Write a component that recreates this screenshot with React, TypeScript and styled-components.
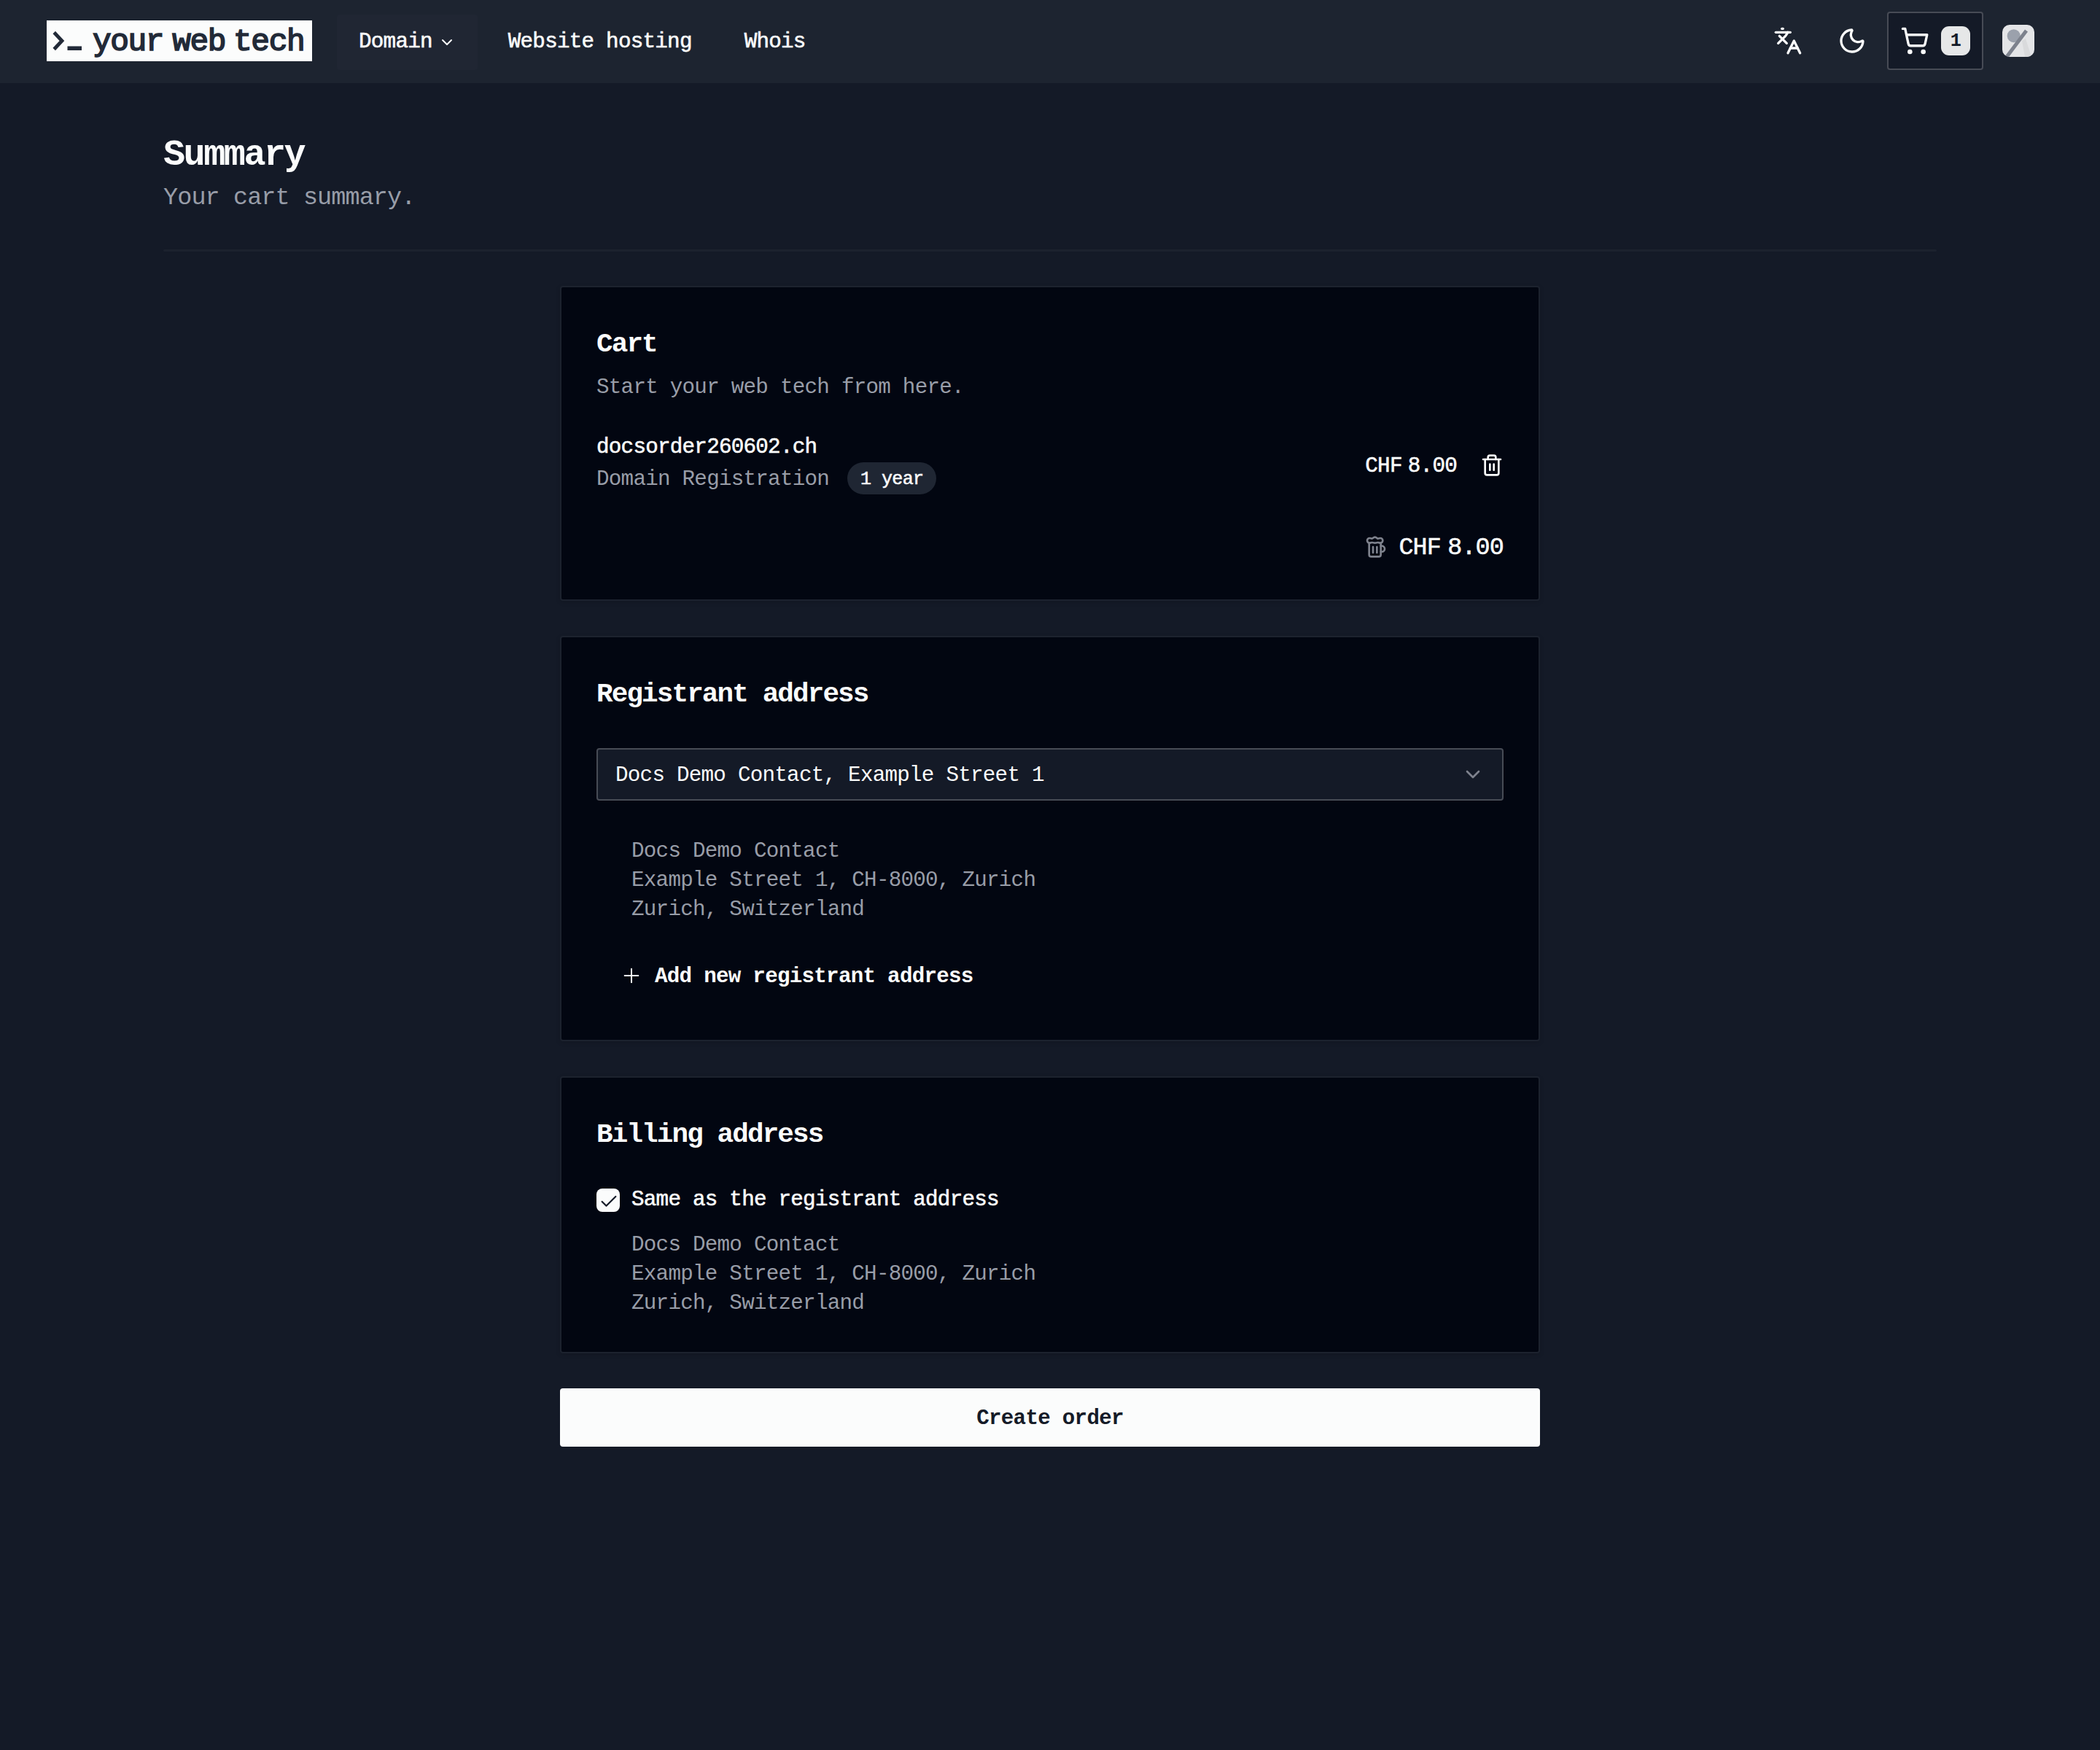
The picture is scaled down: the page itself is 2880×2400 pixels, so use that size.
import React from 'react';
import styled, { createGlobalStyle, css } from 'styled-components';
import { Beer, Check, ChevronDown, Languages, Moon, Plus, ShoppingCart, Trash2 } from 'lucide-react';

const color = {
  page: '#141a27',
  header: '#1d2430',
  card: '#020611',
  line: '#1c222e',
  outline: '#474b55',
  text: '#fbfcfc',
  muted: '#989da8',
  dim: '#7e828d',
  ink: '#151b28',
};

// Monospaced text on a 0.6em grid; glyphs are slightly enlarged while the advance stays on the grid.
const mono = (size: number, tracking = 0) => css`
  font-size: ${size * 1.045}px;
  letter-spacing: ${(size * 0.6 - size * 1.045 * 0.6001 + tracking).toFixed(3)}px;
`;

const medium = css`
  -webkit-text-stroke: 0.55px currentColor;
`;

const GlobalStyle = createGlobalStyle`
  *, *::before, *::after { box-sizing: border-box; }
  body {
    margin: 0;
    background: ${color.page};
    color: ${color.text};
    font-family: "Liberation Mono", "DejaVu Sans Mono", monospace;
    -webkit-font-smoothing: antialiased;
  }
  h1, h2, p { margin: 0; }
  button { font: inherit; color: inherit; border: 0; background: none; padding: 0; }
  svg { display: block; flex: none; }
`;

const Page = styled.div`
  min-height: 2400px;
  background: ${color.page};
`;

const Header = styled.header`
  display: flex;
  align-items: center;
  height: 114px;
  padding: 0 90px 2px 64px;
  background: ${color.header};
`;

const Logo = styled.a`
  display: flex;
  align-items: center;
  width: 364px;
  height: 56px;
  padding-left: 8px;
  background: ${color.text};
  color: #222a38;
`;

const LogoWord = styled.span<{ $gap: number }>`
  margin-left: ${(p) => p.$gap}px;
  ${mono(41, -0.3)}
  line-height: 59px;
  height: 56px;
  -webkit-text-stroke: 1.7px currentColor;
`;

const Nav = styled.nav`
  display: flex;
  align-items: center;
  gap: 12px;
  margin: 4px 0 0 34px;
`;

const NavItem = styled.a<{ $active?: boolean }>`
  display: flex;
  align-items: center;
  gap: 8px;
  height: 76px;
  padding: 0 30px;
  border-radius: 4px;
  background: ${(p) => (p.$active ? '#202633' : 'transparent')};
  ${mono(28)}
  ${medium}
  line-height: 40px;
  white-space: nowrap;
`;

const Actions = styled.div`
  display: flex;
  align-items: center;
  margin-left: auto;
`;

const IconButton = styled.button`
  display: grid;
  place-items: center;
  width: 88px;
  height: 80px;
`;

const CartButton = styled.button`
  display: flex;
  align-items: center;
  gap: 16px;
  width: 132px;
  height: 80px;
  margin-left: 4px;
  padding-left: 16px;
  border: 2px solid ${color.outline};
  border-radius: 4px;
  background: ${color.page};
`;

const CartCount = styled.span`
  width: 40px;
  height: 40px;
  border-radius: 11px;
  background: #e6e7e8;
  color: ${color.ink};
  ${mono(24)}
  font-weight: 700;
  line-height: 42px;
  text-align: center;
`;

const Avatar = styled.div`
  width: 44px;
  height: 44px;
  margin-left: 26px;
  border-radius: 10px;
  overflow: hidden;
  background: #e4e5e7;
`;

const Main = styled.main`
  width: 2432px;
  margin: 0 auto;
  padding-top: 67px;
`;

const PageTitle = styled.h1`
  ${mono(48, -1.2)}
  font-weight: 700;
  line-height: 64px;
`;

const PageLead = styled.p`
  margin-top: 4px;
  ${mono(32)}
  line-height: 44px;
  color: ${color.muted};
`;

const Separator = styled.hr`
  height: 3px;
  margin: 49px 0 47px;
  border: 0;
  border-radius: 2px;
  background: ${color.line};
`;

const Column = styled.div`
  display: flex;
  flex-direction: column;
  gap: 48px;
  width: 1344px;
  margin: 0 auto;
`;

const Card = styled.section<{ $height: number }>`
  display: flex;
  flex-direction: column;
  height: ${(p) => p.$height}px;
  padding: 48px 48px 0;
  border: 2px solid ${color.line};
  border-radius: 4px;
  background: ${color.card};
  box-shadow: 0 2px 6px rgba(0, 0, 0, 0.14);
`;

const CardTitle = styled.h2`
  ${mono(36, -0.9)}
  font-weight: 700;
  line-height: 60px;
`;

const CardDescription = styled.p`
  margin-top: 10px;
  ${mono(28)}
  line-height: 40px;
  color: ${color.muted};
`;

const CartItem = styled.div`
  display: flex;
  justify-content: space-between;
  height: 88px;
  margin-top: 42px;
`;

const ItemName = styled.div`
  ${mono(28)}
  ${medium}
  line-height: 40px;
`;

const ItemMeta = styled.div`
  display: flex;
  align-items: center;
  gap: 25px;
  height: 44px;
  ${mono(28)}
  line-height: 40px;
  color: ${color.muted};
`;

const ItemType = styled.span`
  padding-top: 4px;
`;

const Badge = styled.span`
  height: 44px;
  padding: 0 18px;
  border-radius: 22px;
  background: #1f2633;
  color: ${color.text};
  ${mono(24)}
  ${medium}
  line-height: 47px;
`;

const PriceGroup = styled.div`
  display: flex;
  align-items: center;
  gap: 32px;
`;

const Price = styled.span<{ $size: number }>`
  display: flex;
  gap: ${(p) => p.$size * 0.29}px;
  padding-top: ${(p) => (p.$size > 30 ? 2 : 4)}px;
  ${(p) => mono(p.$size)}
  ${medium}
  line-height: 40px;
`;

const TotalRow = styled.div`
  display: flex;
  align-items: center;
  justify-content: flex-end;
  gap: 15px;
  height: 44px;
  margin-top: 46px;
`;

const Select = styled.button`
  display: flex;
  align-items: center;
  justify-content: space-between;
  height: 72px;
  margin-top: 44px;
  padding: 0 24px;
  border: 2px solid ${color.outline};
  border-radius: 4px;
  background: ${color.page};
  ${mono(28)}
  line-height: 40px;
`;

const SelectValue = styled.span`
  padding-top: 4px;
`;

const Address = styled.address<{ $top: number }>`
  margin-top: ${(p) => p.$top}px;
  padding-left: 48px;
  ${mono(28)}
  font-style: normal;
  line-height: 40px;
  color: ${color.muted};
`;

const GhostButton = styled.button`
  display: flex;
  align-items: center;
  align-self: flex-start;
  gap: 16px;
  height: 80px;
  margin-top: 30px;
  padding-left: 32px;
  ${mono(28)}
  font-weight: 700;
  line-height: 40px;
`;

const GhostLabel = styled.span`
  padding-top: 4px;
`;

const CheckRow = styled.label`
  display: flex;
  align-items: center;
  gap: 16px;
  margin-top: 44px;
  ${mono(28)}
  ${medium}
  line-height: 32px;
`;

const Checkbox = styled.span`
  display: grid;
  place-items: center;
  width: 32px;
  height: 32px;
  padding: 4px 0 0 1px;
  border-radius: 8px;
  background: ${color.text};
  color: ${color.ink};
`;

const SubmitButton = styled.button`
  height: 80px;
  padding-top: 4px;
  border-radius: 4px;
  background: ${color.text};
  color: ${color.ink};
  ${mono(28)}
  font-weight: 700;
  line-height: 76px;
  text-align: center;
`;

function PromptMark() {
  return (
    <svg width="44" height="56" viewBox="0 0 44 56" fill="none" stroke="currentColor" strokeWidth="4.8">
      <path d="M2.2 16.5 13 28 2.2 39.5" />
      <path d="M20.5 38.2h19.5" strokeWidth="5.6" />
    </svg>
  );
}

function AvatarArt() {
  return (
    <svg width="44" height="44" viewBox="0 0 44 44">
      <path d="M27 22 32 19 40 44 31 44Z" fill="#d9dadc" />
      <circle cx="15.7" cy="15.2" r="9" fill="#9ba1ac" />
      <path d="M6 44 33 8" stroke="#7d828d" strokeWidth="5" />
    </svg>
  );
}

function CustomerAddress({ top }: { top: number }) {
  return (
    <Address $top={top}>
      Docs Demo Contact
      <br />
      Example Street 1, CH-8000, Zurich
      <br />
      Zurich, Switzerland
    </Address>
  );
}

function Amount({ size, value }: { size: number; value: string }) {
  return (
    <Price $size={size}>
      <span>CHF</span>
      <span>{value}</span>
    </Price>
  );
}

export default function App() {
  return (
    <Page>
      <GlobalStyle />
      <Header>
        <Logo>
          <PromptMark />
          <LogoWord $gap={11}>your</LogoWord>
          <LogoWord $gap={12}>web</LogoWord>
          <LogoWord $gap={11}>tech</LogoWord>
        </Logo>
        <Nav>
          <NavItem $active>
            Domain
            <ChevronDown size={24} />
          </NavItem>
          <NavItem>Website hosting</NavItem>
          <NavItem>Whois</NavItem>
        </Nav>
        <Actions>
          <IconButton aria-label="Language">
            <Languages size={40} />
          </IconButton>
          <IconButton aria-label="Theme">
            <Moon size={40} />
          </IconButton>
          <CartButton>
            <ShoppingCart size={40} />
            <CartCount>1</CartCount>
          </CartButton>
          <Avatar>
            <AvatarArt />
          </Avatar>
        </Actions>
      </Header>
      <Main>
        <PageTitle>Summary</PageTitle>
        <PageLead>Your cart summary.</PageLead>
        <Separator />
        <Column>
          <Card $height={432}>
            <CardTitle>Cart</CardTitle>
            <CardDescription>Start your web tech from here.</CardDescription>
            <CartItem>
              <div>
                <ItemName>docsorder260602.ch</ItemName>
                <ItemMeta>
                  <ItemType>Domain Registration</ItemType>
                  <Badge>1 year</Badge>
                </ItemMeta>
              </div>
              <PriceGroup>
                <Amount size={28} value="8.00" />
                <Trash2 size={32} />
              </PriceGroup>
            </CartItem>
            <TotalRow>
              <Beer size={32} color={color.dim} />
              <Amount size={32} value="8.00" />
            </TotalRow>
          </Card>
          <Card $height={556}>
            <CardTitle>Registrant address</CardTitle>
            <Select>
              <SelectValue>Docs Demo Contact, Example Street 1</SelectValue>
              <ChevronDown size={32} color={color.dim} />
            </Select>
            <CustomerAddress top={50} />
            <GhostButton>
              <Plus size={32} strokeWidth={1.5} />
              <GhostLabel>Add new registrant address</GhostLabel>
            </GhostButton>
          </Card>
          <Card $height={380}>
            <CardTitle>Billing address</CardTitle>
            <CheckRow>
              <Checkbox>
                <Check size={28} strokeWidth={1.9} />
              </Checkbox>
              Same as the registrant address
            </CheckRow>
            <CustomerAddress top={26} />
          </Card>
          <SubmitButton>Create order</SubmitButton>
        </Column>
      </Main>
    </Page>
  );
}
